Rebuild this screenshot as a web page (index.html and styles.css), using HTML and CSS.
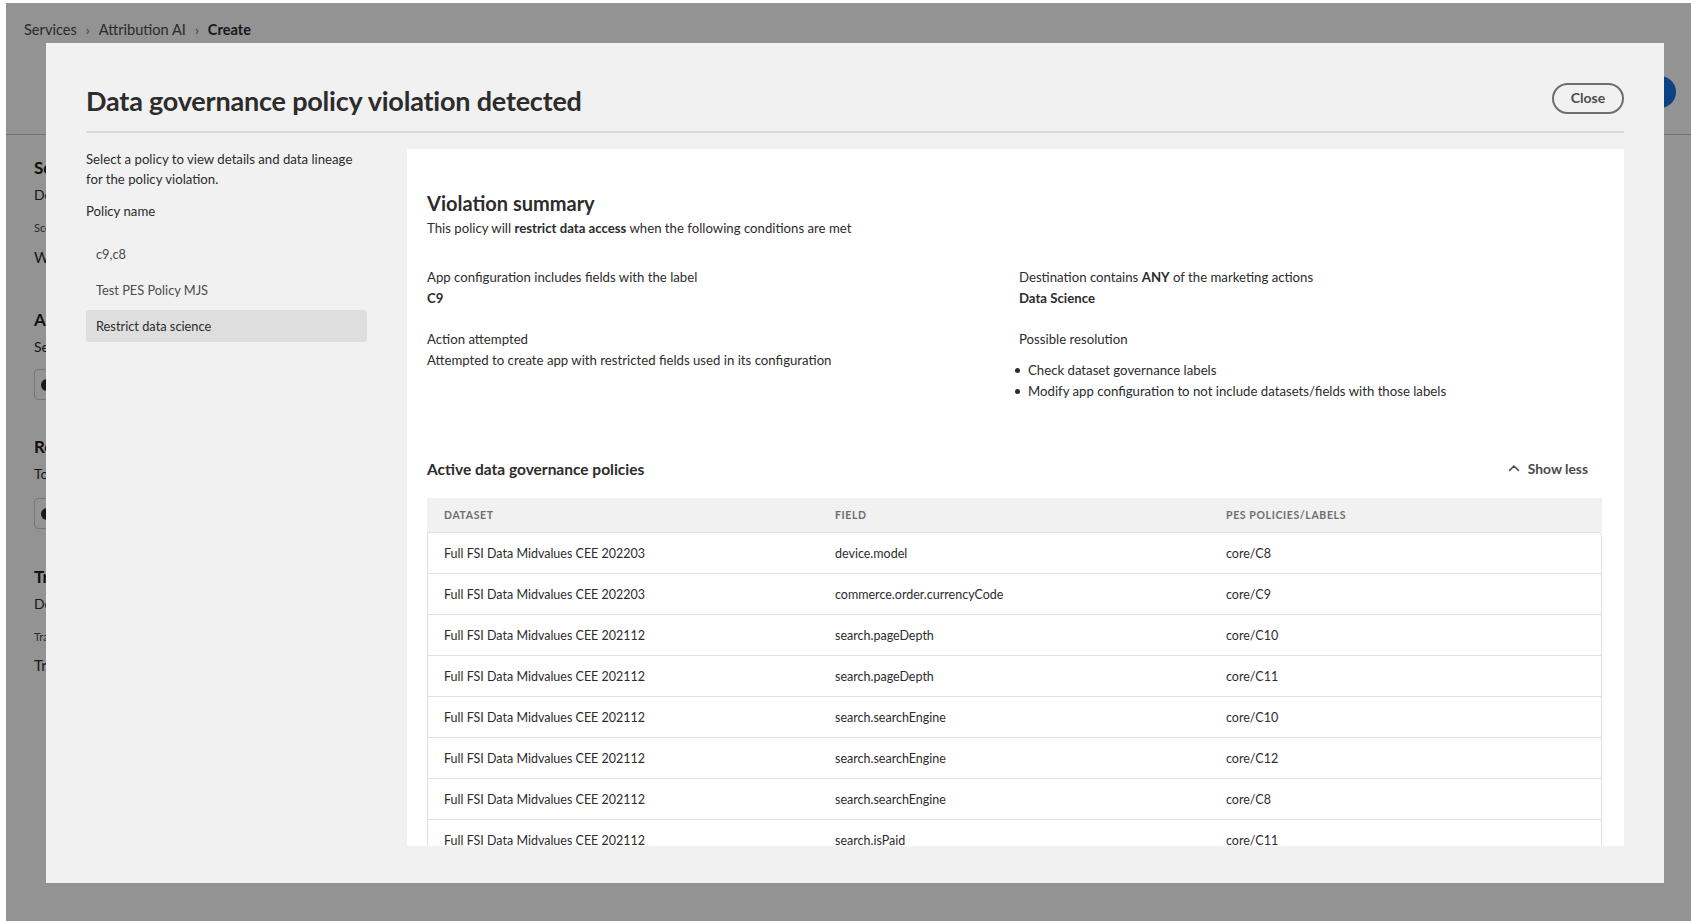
FILE: index.html
```html
<!DOCTYPE html>
<html lang="en">
<head>
<meta charset="utf-8">
<title>Data governance policy violation detected</title>
<link rel="stylesheet" href="styles.css">
</head>
<body>
<div class="app">
  <header class="topbar">
    <nav class="crumbs">
      <span class="crumb">Services</span>
      <span class="sep">&#x203A;</span>
      <span class="crumb">Attribution AI</span>
      <span class="sep">&#x203A;</span>
      <span class="crumb current">Create</span>
    </nav>
    <div class="top-actions">
      <div class="cta" aria-hidden="true"></div>
    </div>
  </header>
  <main class="app-body">
    <section class="bg-section s1">
      <h3 class="bg-h">Scoring</h3>
      <p class="bg-p">Define</p>
      <p class="bg-small">Scoring</p>
      <p class="bg-p big">Weekly</p>
    </section>
    <section class="bg-section s2">
      <h3 class="bg-h">Advanced</h3>
      <p class="bg-p">Select</p>
      <div class="bg-field"><span class="bg-dot"></span></div>
    </section>
    <section class="bg-section s3">
      <h3 class="bg-h">Regional</h3>
      <p class="bg-p">Touch</p>
      <div class="bg-field"><span class="bg-dot"></span></div>
    </section>
    <section class="bg-section s4">
      <h3 class="bg-h">Training</h3>
      <p class="bg-p">Define</p>
      <p class="bg-small">Training</p>
      <p class="bg-p big">Train</p>
    </section>
  </main>
  <div class="overlay"></div>

  <div class="modal" role="dialog">
    <div class="modal-head">
      <h1 class="modal-title">Data governance policy violation detected</h1>
      <button class="close-btn">Close</button>
    </div>
    <div class="modal-body">
      <aside class="policy-col">
        <p class="policy-desc">Select a policy to view details and data lineage for the policy violation.</p>
        <p class="policy-label">Policy name</p>
        <ul class="policy-list">
          <li class="policy-item">c9,c8</li>
          <li class="policy-item">Test PES Policy MJS</li>
          <li class="policy-item selected">Restrict data science</li>
        </ul>
      </aside>
      <section class="detail-panel">
        <h2 class="vs-title">Violation summary</h2>
        <p class="vs-sub">This policy will <b>restrict data access</b> when the following conditions are met</p>
        <div class="cond-grid">
          <div class="cond">
            <p>App configuration includes fields with the label</p>
            <p class="strong">C9</p>
          </div>
          <div class="cond">
            <p>Destination contains <b>ANY</b> of the marketing actions</p>
            <p class="strong">Data Science</p>
          </div>
          <div class="cond">
            <p>Action attempted</p>
            <p>Attempted to create app with restricted fields used in its configuration</p>
          </div>
          <div class="cond">
            <p>Possible resolution</p>
            <ul class="res-list">
              <li>Check dataset governance labels</li>
              <li>Modify app configuration to not include datasets/fields with those labels</li>
            </ul>
          </div>
        </div>
        <div class="adp-head">
          <h3 class="adp-title">Active data governance policies</h3>
          <button class="show-less">
            <svg width="12" height="8" viewBox="0 0 12 8" aria-hidden="true"><path d="M1.5 6.5 L6 2 L10.5 6.5" fill="none" stroke="#4b4b4b" stroke-width="1.6" stroke-linecap="round" stroke-linejoin="round"/></svg>
            <span>Show less</span>
          </button>
        </div>
        <div class="tbl">
          <div class="tbl-head">
            <div>Dataset</div><div>Field</div><div>PES Policies/Labels</div>
          </div>
          <div class="tbl-body">
            <div class="tr"><div>Full FSI Data Midvalues CEE 202203</div><div>device.model</div><div>core/C8</div></div>
            <div class="tr"><div>Full FSI Data Midvalues CEE 202203</div><div>commerce.order.currencyCode</div><div>core/C9</div></div>
            <div class="tr"><div>Full FSI Data Midvalues CEE 202112</div><div>search.pageDepth</div><div>core/C10</div></div>
            <div class="tr"><div>Full FSI Data Midvalues CEE 202112</div><div>search.pageDepth</div><div>core/C11</div></div>
            <div class="tr"><div>Full FSI Data Midvalues CEE 202112</div><div>search.searchEngine</div><div>core/C10</div></div>
            <div class="tr"><div>Full FSI Data Midvalues CEE 202112</div><div>search.searchEngine</div><div>core/C12</div></div>
            <div class="tr"><div>Full FSI Data Midvalues CEE 202112</div><div>search.searchEngine</div><div>core/C8</div></div>
            <div class="tr"><div>Full FSI Data Midvalues CEE 202112</div><div>search.isPaid</div><div>core/C11</div></div>
          </div>
        </div>
      </section>
    </div>
  </div>
</div>
</body>
</html>
```
FILE: styles.css
```css
* { box-sizing: border-box; }
html, body { margin: 0; padding: 0; background: #ffffff; }
body {
  font-family: Lato, "Open Sans", "Liberation Sans", sans-serif;
  color: #2c2c2c;
  overflow: hidden;
}
p, h1, h2, h3, ul { margin: 0; padding: 0; }

.app {
  position: relative;
  margin: 3px 0 0 6px;
  height: 918px;
  background: #ffffff;
  overflow: hidden;
}

/* underlying page */
.topbar {
  height: 132px;
  border-bottom: 1px solid #c8c8c8;
  display: flex;
  justify-content: space-between;
  padding: 0 15px 0 18px;
}
.crumbs {
  display: flex;
  align-items: center;
  gap: 9px;
  height: 52px;
  font-size: 14.6px;
  color: #4b4b4b;
  white-space: nowrap;
}
.crumbs .sep { color: #6e6e6e; font-size: 14px; }
.crumbs .current { font-weight: 700; color: #2c2c2c; }
.top-actions { padding-top: 73px; }
.cta {
  width: 80px;
  height: 32px;
  border-radius: 16px;
  background: #1473e6;
}
.app-body {
  width: 40px;
  overflow: hidden;
  white-space: nowrap;
  padding: 0 0 0 28px;
  box-sizing: content-box;
}
.bg-h { font-size: 17px; font-weight: 700; color: #1e1e1e; line-height: 24px; }
.bg-p { font-size: 14px; color: #2c2c2c; line-height: 20px; margin-top: 5px; }
.bg-p.big { font-size: 15px; margin-top: 11px; }
.bg-small { font-size: 11px; color: #4b4b4b; margin-top: 15px; line-height: 16px; }
.s1 { padding-top: 21px; }
.s2 { margin-top: 41px; }
.s3 { margin-top: 35px; }
.s4 { margin-top: 36px; }
.s4 .bg-p.big { margin-top: 10px; }
.bg-field {
  width: 200px; height: 31px; margin-top: 12px;
  border: 1px solid #cfcfcf; border-radius: 4px; background: #fff;
  display: flex; align-items: center; padding-left: 6px;
}
.s3 .bg-field { margin-top: 14px; }
.bg-dot { width: 12px; height: 12px; border-radius: 50%; background: #2c2c2c; }

.overlay {
  position: absolute;
  inset: 0;
  background: rgba(0, 0, 0, 0.425);
}

/* modal */
.modal {
  position: absolute;
  left: 40px;
  top: 40px;
  width: 1618px;
  height: 840px;
  background: #f1f1f1;
  padding: 0 40px 37px;
  display: flex;
  flex-direction: column;
}
.modal-head {
  height: 90px;
  border-bottom: 2px solid #dadada;
  display: flex;
  justify-content: space-between;
  align-items: center;
  padding-top: 22px;
}
.modal-title {
  font-size: 27px;
  font-weight: 700;
  color: #2c2c2c;
  letter-spacing: -0.2px;
  line-height: 36px;
  margin-top: 6px;
}
.close-btn {
  width: 72px;
  height: 31px;
  border: 2px solid #6e6e6e;
  border-radius: 16px;
  background: transparent;
  font-family: inherit;
  font-size: 14px;
  font-weight: 700;
  color: #4b4b4b;
  padding: 0 0 1px;
  margin-top: 0;
}

.modal-body {
  flex: 1;
  min-height: 0;
  display: flex;
  gap: 40px;
  padding-top: 16px;
}
.policy-col { width: 281px; flex: none; }
.policy-desc { font-size: 13.2px; line-height: 20px; color: #2c2c2c; margin-top: 0; }
.policy-label { font-size: 13.2px; line-height: 20px; margin-top: 12px; color: #2c2c2c; }
.policy-list { list-style: none; margin-top: 17px; display: flex; flex-direction: column; gap: 4px; }
.policy-item {
  height: 32px;
  line-height: 32px;
  padding-left: 10px;
  border-radius: 4px;
  font-size: 12.8px;
  color: #4b4b4b;
}
.policy-item.selected { background: #dedede; color: #2c2c2c; }

.detail-panel {
  flex: 1;
  min-width: 0;
  background: #ffffff;
  overflow: hidden;
  padding: 40px 22px 0 20px;
}
.vs-title { font-size: 20px; font-weight: 700; line-height: 28px; color: #2c2c2c; }
.vs-sub { font-size: 13.2px; line-height: 20px; margin-top: 1px; color: #2c2c2c; }
.vs-sub b { font-weight: 700; }

.cond-grid {
  display: grid;
  grid-template-columns: 592px 1fr;
  row-gap: 20px;
  margin-top: 29px;
}
.cond p { font-size: 13.2px; line-height: 21px; color: #2c2c2c; }
.cond p.strong { font-weight: 700; }
.cond b { font-weight: 700; }
.res-list {
  margin-top: 10px;
  padding-left: 9px;
  list-style: none;
}
.res-list li {
  font-size: 13.2px;
  line-height: 21px;
  color: #2c2c2c;
  position: relative;
}
.res-list li::before {
  content: "";
  position: absolute;
  left: -13px;
  top: 8px;
  width: 5px;
  height: 5px;
  border-radius: 50%;
  background: #2c2c2c;
}

.adp-head {
  display: flex;
  justify-content: space-between;
  align-items: center;
  margin-top: 55px;
  height: 24px;
}
.adp-title { font-size: 15.5px; font-weight: 700; color: #2c2c2c; }
.show-less {
  display: flex;
  align-items: center;
  gap: 8px;
  border: 0;
  background: transparent;
  font-family: inherit;
  font-size: 13.8px;
  font-weight: 700;
  color: #4b4b4b;
  padding: 0 14px 2px 0;
}

.tbl { margin-top: 17px; }
.tbl-head, .tr {
  display: grid;
  grid-template-columns: 1fr 1fr 1fr;
}
.tbl-head {
  height: 34px;
  background: #f1f1f1;
  align-items: center;
  padding-right: 2px;
}
.tbl-head div {
  padding-left: 17px;
  font-size: 10.5px;
  font-weight: 700;
  letter-spacing: 0.06em;
  text-transform: uppercase;
  color: #6e6e6e;
}
.tbl-body {
  border: 1px solid #e1e1e1;
  border-bottom: 0;
  border-radius: 0 4px 0 0;
  background: #fff;
}
.tr {
  height: 41px;
  border-bottom: 1px solid #e1e1e1;
  align-items: center;
}
.tr div {
  padding-left: 16px;
  font-size: 12.5px;
  color: #2c2c2c;
}
```
